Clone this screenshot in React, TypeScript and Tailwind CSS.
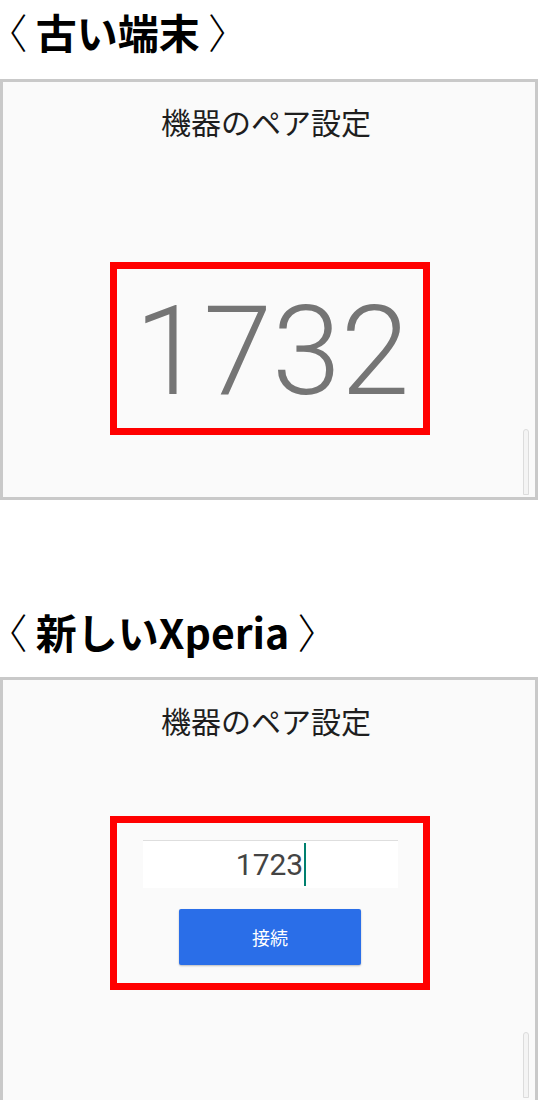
import React from "react";

const jp = { fontFamily: '"Noto Sans CJK JP", "Noto Sans", sans-serif' };
const roboto = { fontFamily: 'Roboto, "Noto Sans", sans-serif' };

function ScrollThumb() {
  return (
    <div className="absolute right-[6px] bottom-[2px] w-[6px] h-[66px] rounded-t-full border border-[#dcdcdc] bg-[#f4f4f4]" />
  );
}

function Heading({ children }: { children: React.ReactNode }) {
  return (
    <div
      className="flex items-center pl-[6px] text-[41px] leading-none text-black whitespace-pre"
      style={jp}
    >
      <span className="font-light [font-feature-settings:'palt']">〈</span>
      <span className="font-bold"> {children} </span>
      <span className="font-light [font-feature-settings:'palt']">〉</span>
    </div>
  );
}

export default function App() {
  return (
    <div className="w-[540px] h-[1100px] bg-white overflow-hidden">
      <div className="h-[79px] pt-[11px]">
        <Heading>古い端末</Heading>
      </div>
      <div className="relative w-[538px] h-[421px] border-[3px] border-[#c9c9c9] bg-[#fafafa]">
        <div className="mt-[19px] text-center text-[30px] leading-[40px] text-[#1e1e1e] mr-[6px]" style={jp}>
          機器のペア設定
        </div>
        <div className="ml-[107px] mt-[121px] w-[320px] h-[173px] border-[7px] border-[#ff0000] flex items-center justify-center">
          <span className="text-[124px] font-light leading-none text-[#757575] ml-[4px] mt-[6px]" style={roboto}>
            1732
          </span>
        </div>
        <ScrollThumb />
      </div>
      <div className="h-[177px] pt-[111px]">
        <Heading>新しいXperia</Heading>
      </div>
      <div className="relative w-[538px] h-[423px] border-[3px] border-b-0 border-[#c9c9c9] bg-[#fafafa]">
        <div className="mt-[20px] text-center text-[30px] leading-[40px] text-[#1e1e1e] mr-[6px]" style={jp}>
          機器のペア設定
        </div>
        <div className="ml-[107px] mt-[76px] w-[320px] h-[174px] border-[7px] border-[#ff0000] flex flex-col items-center">
          <div className="mt-[17px] w-[255px] h-[48px] bg-white border-t border-[#dedede] flex items-center justify-center">
            <span className="text-[30px] leading-none text-[#444444] ml-[2px]" style={roboto}>
              1723
            </span>
            <span className="w-[2px] h-[43px] bg-[#00806f] ml-[1px]" />
          </div>
          <button
            className="mt-[21px] w-[182px] h-[56px] rounded-[2px] bg-[#2a6ee8] text-white text-[18px] shadow-[0_1px_2px_rgba(0,0,0,0.25)]"
            style={jp}
          >
            接続
          </button>
        </div>
        <ScrollThumb />
      </div>
    </div>
  );
}
